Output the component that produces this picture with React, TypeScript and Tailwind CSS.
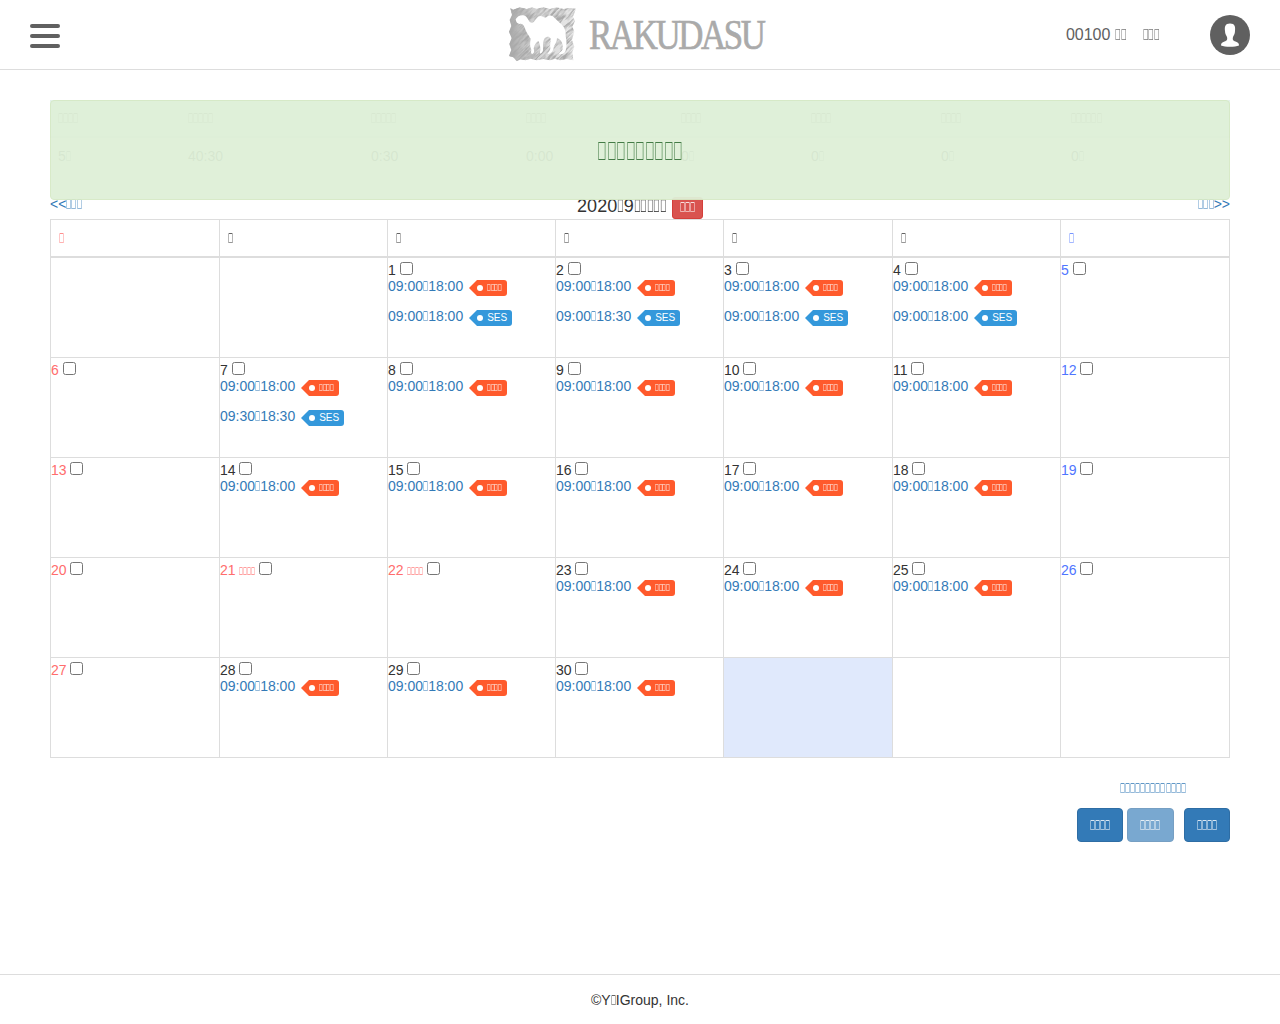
import React from "react";

const GLYPH = "\uE83A";

function Box({ n = 1 }: { n?: number }) {
  return (
    <span className="whitespace-nowrap">
      {Array.from({ length: n }, (_, i) => (
        <span key={i} className="inline-block w-[0.365em] origin-left scale-x-[0.487] [-webkit-text-stroke:0.15px_currentColor]">{GLYPH}</span>
      ))}
    </span>
  );
}

type Tone = "sun" | "day" | "sat";
type Entry = { from: string; to: string; kind: "std" | "ses" };
type Day = { n?: number; tone?: Tone; holiday?: boolean; entries?: Entry[]; today?: boolean };

const std: Entry = { from: "09:00", to: "18:00", kind: "std" };
const ses = (from: string, to: string): Entry => ({ from, to, kind: "ses" });

const extra: Record<number, Entry> = {
  1: ses("09:00", "18:00"),
  2: ses("09:00", "18:30"),
  3: ses("09:00", "18:00"),
  4: ses("09:00", "18:00"),
  7: ses("09:30", "18:30"),
};

const weeks: Day[][] = Array.from({ length: 5 }, (_, w) =>
  Array.from({ length: 7 }, (_, d) => {
    const n = w * 7 + d - 1;
    if (n < 1 || n > 30) return { today: n === 31 };
    const holiday = n === 21 || n === 22;
    const tone: Tone = d === 0 || holiday ? "sun" : d === 6 ? "sat" : "day";
    const entries = tone === "day" ? (extra[n] ? [std, extra[n]] : [std]) : [];
    return { n, tone, holiday, entries };
  })
);

const toneClass: Record<Tone, string> = {
  sun: "text-[#ff6d6d]",
  day: "text-[#333]",
  sat: "text-[#4f75ff]",
};

function Tag({ kind }: { kind: Entry["kind"] }) {
  const isSes = kind === "ses";
  return (
    <span className="ml-[6px] mt-1 flex h-4 text-[10px] leading-4 text-white">
      <svg width="8" height="16" viewBox="0 0 8 16" className={isSes ? "text-[#3498db]" : "text-[#ff5a2c]"}>
        <path d="M8 0 L0 8 L8 16Z" fill="currentColor" />
      </svg>
      <span className={`flex items-center rounded-r-[3px] pr-[5px] ${isSes ? "bg-[#3498db]" : "bg-[#ff5a2c]"}`}>
        <span className="mr-1 h-[6px] w-[6px] rounded-full bg-white" />
        {isSes ? "SES" : <Box n={4} />}
      </span>
    </span>
  );
}

function DayCell({ day }: { day: Day }) {
  return (
    <td className={`h-[100px] border border-[#ddd] p-0 align-top ${day.today ? "bg-[#e0e9fc]" : ""}`}>
      {day.n && (
        <div className="h-[99px]">
          <div className={`flex h-[18px] ${toneClass[day.tone!]}`}>
            <span className="mt-[2px]">{day.n}</span>
            {day.holiday && <span className="ml-[3.75px] mt-[3px] text-[11px]"><Box n={4} /></span>}
            <input type="checkbox" className={`mt-1 h-[13px] w-[13px] ${day.holiday ? "ml-[3.3px]" : "ml-[3.75px]"}`} />
          </div>
          {day.entries!.map((e, i) => (
            <div key={i} className="mb-[10px] flex h-5 text-[#337ab7]">
              <a>{e.from}<Box />{e.to}</a>
              <Tag kind={e.kind} />
            </div>
          ))}
        </div>
      )}
    </td>
  );
}

function Logo() {
  return (
    <svg width="280" height="69" viewBox="0 0 280 69" className="block">
      <defs>
        <clipPath id="sketch">
          <path d="M31 25 L40 29 L60 22 L80 27 L95 22 L110 26 L130 22 L150 27 L170 22 L190 27 L210 24 L228 26 L219 50 L225 62 L217 80 L223 95 L216 120 L223 140 L217 155 L220 181 L200 177 L180 181 L165 176 L150 181 L130 177 L110 181 L92 176 L76 181 L62 178 L50 184 L40 172 L27 168 L34 150 L28 132 L35 115 L27 95 L34 78 L29 60 L36 45Z" />
        </clipPath>
        <filter id="pencil" x="0" y="0" width="100%" height="100%">
          <feTurbulence type="fractalNoise" baseFrequency="0.028 0.2" numOctaves="3" seed="8" />
          <feColorMatrix values="0 0 0 0 .4  0 0 0 0 .4  0 0 0 0 .4  3.2 0 0 0 -1.2" />
        </filter>
        <linearGradient id="fade">
          <stop offset="0" stopColor="#777" stopOpacity=".65" />
          <stop offset=".3" stopColor="#888" stopOpacity=".42" />
          <stop offset="1" stopColor="#aaa" stopOpacity=".25" />
        </linearGradient>
      </defs>
      <g transform="scale(.33333)">
        <g clipPath="url(#sketch)">
          <rect x="26" y="20" width="204" height="165" fill="url(#fade)" />
          <g transform="rotate(-45 125 100)">
            <rect x="-30" y="-50" width="310" height="300" filter="url(#pencil)" />
          </g>
        </g>
        <path
          d="M47 58 C51 50 60 45 70 46 C77 47 80 52 84 58 C88 66 94 72 101 66 C109 58 113 47 122 48 C128 48 132 55 139 52 C147 44 157 46 163 53 C170 61 178 66 186 74 C195 83 198 95 197 108 C200 122 201 136 197 152 C195 161 184 164 177 162 C180 156 188 154 188 145 C189 136 187 129 183 123 C179 118 175 115 171 115 C171 127 164 134 161 142 C160 152 155 161 143 162 C145 155 151 153 151 143 C149 133 153 126 152 116 C147 108 140 109 133 116 C129 122 130 132 129 142 C130 151 129 159 120 161 C119 155 122 151 121 144 C120 136 119 129 115 123 C108 127 103 136 101 145 C103 153 104 160 97 162 C92 160 93 155 94 149 C89 139 90 128 92 116 C85 105 79 98 76 88 C72 77 68 69 59 72 C53 72 48 67 47 58Z"
          fill="#fff"
        />
      </g>
      <text transform="translate(89 48.5) scale(.81 1)" fontFamily="'Liberation Serif', serif" fontSize="43" letterSpacing="-2.9" fill="#aaa" stroke="#aaa" strokeWidth=".7">
        RAKUDASU
      </text>
    </svg>
  );
}

const summary: [number, React.ReactNode, string][] = [
  [4, <>5<Box /></>, "w-[130px]"],
  [5, "40:30", "w-[183px]"],
  [5, "0:30", "w-[155px]"],
  [4, "0:00", "w-[155px]"],
  [4, <>0<Box /></>, "w-[130px]"],
  [4, <>0<Box /></>, "w-[130px]"],
  [4, <>0<Box /></>, "w-[130px]"],
  [6, <>0<Box /></>, "w-[167px]"],
];

const button = "h-[34px] rounded border border-[#2e6da4] bg-[#337ab7] px-3";

export default function App() {
  return (
    <div className="flex h-[1024px] w-[1280px] flex-col overflow-hidden bg-white font-['Liberation_Sans',Arial,sans-serif] text-sm leading-5 text-[#333]">
      <header className="grid h-[70px] shrink-0 grid-cols-[500px_280px_500px] border-b border-[#ddd]">
        <div className="flex flex-col gap-[6px] pl-[30px] pt-6">
          <span className="h-1 w-[30px] rounded-full bg-[#606060]" />
          <span className="h-1 w-[30px] rounded-full bg-[#606060]" />
          <span className="h-1 w-[30px] rounded-full bg-[#606060]" />
        </div>
        <Logo />
        <div className="flex justify-end pr-[30px] text-base text-[#606060]">
          <span className="mr-4 mt-[23px]">00100 <Box n={2} /></span>
          <span className="mr-[50px] mt-[23px]"><Box n={3} /></span>
          <svg width="40" height="40" viewBox="0 0 40 40" className="mt-[15px]">
            <circle cx="20" cy="20" r="20" fill="#606060" />
            <path d="M20 8.6 C25 8.6 25.5 12 25 16 C25 19 23.7 20 23 22 C22.4 25 23 25.5 25.5 26.5 C28 27.4 29 28 29 30.5 C25 32.2 15 32.2 11 30.5 C11 28 12 27.4 14.5 26.5 C17 25.5 17.6 25 17 22 C16.3 20 15 19 15 16 C14.5 12 15 8.6 20 8.6Z" fill="#fff" />
          </svg>
        </div>
      </header>

      <main className="relative flex-1 px-[50px] pt-[30px]">
        <div className="absolute left-[50px] top-[30px] z-10 flex h-[100px] w-[1180px] items-center justify-center rounded border border-[#d6e9c6] bg-[#dff0d8] pt-[2px] text-[26px] text-[#3c763d] opacity-95">
          <Box n={9} />
        </div>
        <div className="h-[94px]">
          <div className="flex h-[38px] border-b-2 border-[#ddd] bg-[#e4f1ec]">
            {summary.map(([n, , w], i) => (
              <div key={i} className={`p-2 ${w}`}><Box n={n} /></div>
            ))}
          </div>
          <div className="flex h-9">
            {summary.map(([, v, w], i) => (
              <div key={i} className={`p-2 ${w}`}>{v}</div>
            ))}
          </div>
        </div>
        <div className="grid h-[25px] grid-cols-3">
          <a className="text-[#337ab7]">{"<<"}<Box n={3} /></a>
          <div className="flex justify-center whitespace-nowrap text-lg leading-[25px]">
            <span>2020<Box />9<Box n={5} /></span>
            <span className="ml-[5px] mt-[3px] h-[22px] rounded-[3px] border border-[#d43f3a] bg-[#d9534f] px-[7px] text-sm leading-[19px] text-white"><Box n={3} /></span>
          </div>
          <a className="text-right text-[#337ab7]"><Box n={3} />{">>"}</a>
        </div>

        <table className="w-[1180px] table-fixed border-collapse border border-[#ddd]">
          <colgroup>
            <col className="w-[169px]" />
            <col className="w-[168px]" />
            <col className="w-[168px]" />
            <col className="w-[168px]" />
            <col className="w-[169px]" />
            <col className="w-[168px]" />
            <col className="w-[169px]" />
          </colgroup>
          <thead>
            <tr>
              {Array.from({ length: 7 }, (_, i) => (
                <th key={i} className={`h-[37px] border border-b-2 border-[#ddd] p-0 pl-2 text-left font-normal ${i === 0 ? "text-[#ff6d6d]" : i === 6 ? "text-[#4f75ff]" : ""}`}><Box /></th>
              ))}
            </tr>
          </thead>
          <tbody>
            {weeks.map((week, i) => (
              <tr key={i} className="h-[100px]">
                {week.map((d, j) => <DayCell key={j} day={d} />)}
              </tr>
            ))}
          </tbody>
        </table>

        <div className="mt-5 flex justify-end pr-11 text-[#337ab7]"><a><Box n={13} /></a></div>
        <div className="mt-[10px] flex justify-end text-white">
          <button className={`mr-1 ${button}`}><Box n={4} /></button>
          <button className={`mr-[10px] opacity-65 ${button}`}><Box n={4} /></button>
          <button className={button}><Box n={4} /></button>
        </div>
      </main>

      <footer className="h-[50px] shrink-0 border-t border-[#ddd] pt-[15px] text-center">©Y<Box />IGroup, Inc.</footer>
    </div>
  );
}
